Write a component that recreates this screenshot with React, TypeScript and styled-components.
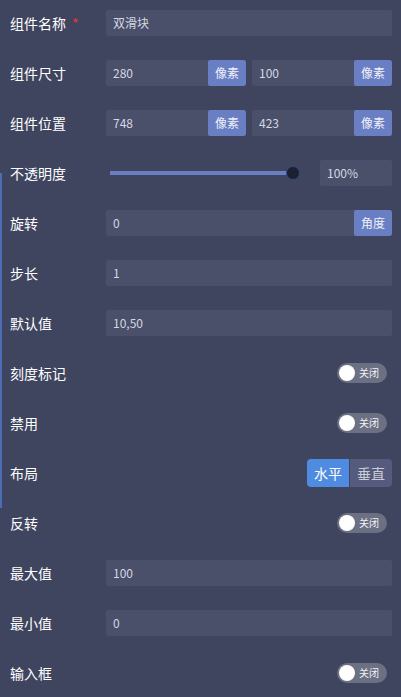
import React from 'react';
import styled, { createGlobalStyle } from 'styled-components';

const GlobalStyle = createGlobalStyle`
  html, body {
    margin: 0;
    padding: 0;
    background: #3f455f;
  }
  body {
    font-family: 'Noto Sans CJK SC', 'Noto Sans', sans-serif;
  }
`;

const Panel = styled.div`
  position: relative;
  width: 401px;
  min-height: 697px;
  box-sizing: border-box;
  padding: 10px 9px 0 10px;
  background: #3f455f;
  display: flex;
  flex-direction: column;
  gap: 24px;
`;

// thin blue marker on the left edge (scroll indicator)
const EdgeMarker = styled.div`
  position: absolute;
  left: 0;
  top: 173px;
  width: 2px;
  height: 335px;
  background: #4b6db3;
`;

const Row = styled.div`
  display: flex;
  align-items: center;
  height: 26px;
`;

const Label = styled.div`
  width: 96px;
  flex-shrink: 0;
  color: #ffffff;
  font-size: 14px;
  line-height: 26px;
`;

const Required = styled.span`
  color: #f0303a;
  margin-left: 6px;
`;

const Controls = styled.div<{ $align?: string }>`
  flex: 1;
  display: flex;
  gap: 6px;
  justify-content: ${p => p.$align || 'flex-start'};
  align-items: center;
`;

const InputGroup = styled.div`
  flex: 1;
  display: flex;
  height: 26px;
  border-radius: 2px;
  overflow: hidden;
  background: #4a5069;
`;

const Field = styled.div`
  flex: 1;
  padding-left: 7px;
  color: #d4d8e2;
  font-size: 12px;
  line-height: 26px;
`;

const Unit = styled.div`
  width: 38px;
  flex-shrink: 0;
  background: #6a7fc3;
  color: #eef1fa;
  font-size: 12px;
  line-height: 26px;
  text-align: center;
  border-radius: 2px;
`;

const SliderBox = styled.div`
  flex: 1;
  display: flex;
  align-items: center;
  gap: 27px;
`;

const Track = styled.div`
  position: relative;
  flex: 1;
  height: 4px;
  margin-left: 4px;
  background: #6a7fc3;
`;

const Knob = styled.div`
  position: absolute;
  right: -7px;
  top: -5px;
  width: 12px;
  height: 12px;
  border-radius: 50%;
  background: #1c2030;
  border: 1px solid #2d4a80;
`;

const Percent = styled.div`
  width: 65px;
  height: 26px;
  padding-left: 7px;
  border-radius: 2px;
  background: #4a5069;
  color: #d4d8e2;
  font-size: 12px;
  line-height: 26px;
`;

const Switch = styled.div`
  width: 50px;
  height: 20px;
  border-radius: 10px;
  background: #6b7083;
  display: flex;
  align-items: center;
  padding: 0 2px;
  box-sizing: border-box;
  gap: 4px;
  margin-right: 5px;
`;

const SwitchKnob = styled.div`
  width: 16px;
  height: 16px;
  border-radius: 50%;
  background: #ffffff;
`;

const SwitchText = styled.span`
  color: #f2f3f7;
  font-size: 10px;
  line-height: 20px;
`;

const Segmented = styled.div`
  display: flex;
  height: 28px;
  border-radius: 4px;
  overflow: hidden;
  gap: 1px;
`;

const Segment = styled.div<{ $active?: boolean }>`
  width: 42px;
  text-align: center;
  font-size: 14px;
  line-height: 28px;
  background: ${p => (p.$active ? '#4f8be0' : '#545b7c')};
  color: ${p => (p.$active ? '#ffffff' : '#c9ccd6')};
`;

const Toggle: React.FC = () => (
  <Switch>
    <SwitchKnob />
    <SwitchText>关闭</SwitchText>
  </Switch>
);

const TextInput: React.FC<{ value: string; unit?: string }> = ({ value, unit }) => (
  <InputGroup>
    <Field>{value}</Field>
    {unit && <Unit>{unit}</Unit>}
  </InputGroup>
);

export default function App() {
  return (
    <>
      <GlobalStyle />
      <Panel>
        <EdgeMarker />
        <Row>
          <Label>
            组件名称<Required>*</Required>
          </Label>
          <Controls>
            <TextInput value="双滑块" />
          </Controls>
        </Row>
        <Row>
          <Label>组件尺寸</Label>
          <Controls>
            <TextInput value="280" unit="像素" />
            <TextInput value="100" unit="像素" />
          </Controls>
        </Row>
        <Row>
          <Label>组件位置</Label>
          <Controls>
            <TextInput value="748" unit="像素" />
            <TextInput value="423" unit="像素" />
          </Controls>
        </Row>
        <Row>
          <Label>不透明度</Label>
          <SliderBox>
            <Track>
              <Knob />
            </Track>
            <Percent>100%</Percent>
          </SliderBox>
        </Row>
        <Row>
          <Label>旋转</Label>
          <Controls>
            <TextInput value="0" unit="角度" />
          </Controls>
        </Row>
        <Row>
          <Label>步长</Label>
          <Controls>
            <TextInput value="1" />
          </Controls>
        </Row>
        <Row>
          <Label>默认值</Label>
          <Controls>
            <TextInput value="10,50" />
          </Controls>
        </Row>
        <Row>
          <Label>刻度标记</Label>
          <Controls $align="flex-end">
            <Toggle />
          </Controls>
        </Row>
        <Row>
          <Label>禁用</Label>
          <Controls $align="flex-end">
            <Toggle />
          </Controls>
        </Row>
        <Row>
          <Label>布局</Label>
          <Controls $align="flex-end">
            <Segmented>
              <Segment $active>水平</Segment>
              <Segment>垂直</Segment>
            </Segmented>
          </Controls>
        </Row>
        <Row>
          <Label>反转</Label>
          <Controls $align="flex-end">
            <Toggle />
          </Controls>
        </Row>
        <Row>
          <Label>最大值</Label>
          <Controls>
            <TextInput value="100" />
          </Controls>
        </Row>
        <Row>
          <Label>最小值</Label>
          <Controls>
            <TextInput value="0" />
          </Controls>
        </Row>
        <Row>
          <Label>输入框</Label>
          <Controls $align="flex-end">
            <Toggle />
          </Controls>
        </Row>
      </Panel>
    </>
  );
}
